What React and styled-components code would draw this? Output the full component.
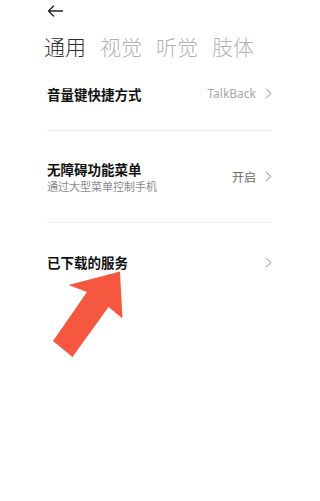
import React from "react";
import styled, { createGlobalStyle } from "styled-components";

const Global = createGlobalStyle`
  html, body { margin: 0; padding: 0; background: #fff; }
  body { font-family: "Noto Sans CJK SC", "Noto Sans", sans-serif; }
  * { box-sizing: border-box; }
`;

const Page = styled.div`
  position: relative;
  width: 320px;
  height: 501px;
  padding: 0 48px 0 47px;
  background: #fff;
  overflow: hidden;
`;

const Header = styled.div`
  height: 22px;
  display: flex;
  align-items: center;
`;

const Tabs = styled.div`
  display: flex;
  gap: 14px;
  margin: 10px 0 0 -3px;
  height: 28px;
  align-items: center;
`;

const Tab = styled.div`
  font-size: 21px;
  line-height: 28px;
  font-weight: 300;
  color: ${(p) => (p.$active ? "#2e2e2e" : "#b2b2b2")};
`;

const List = styled.div`
  display: flex;
  flex-direction: column;
`;

const Row = styled.div`
  height: ${(p) => p.$h}px;
  padding-bottom: ${(p) => p.$pb || 0}px;
  display: flex;
  align-items: center;
  justify-content: space-between;
  border-bottom: ${(p) => (p.$divider ? "1px solid #ececec" : "none")};
`;

const TextBlock = styled.div`
  display: flex;
  flex-direction: column;
`;

const Title = styled.div`
  font-size: 13.5px;
  line-height: 18px;
  font-weight: 700;
  color: #111;
`;

const Subtitle = styled.div`
  font-size: 11px;
  line-height: 16px;
  color: #8a8a8a;
`;

const Trail = styled.div`
  display: flex;
  align-items: center;
  gap: 9px;
`;

const Value = styled.span`
  font-size: 12px;
  font-family: ${(p) => (p.$latin ? '"Noto Sans", sans-serif' : '"Noto Sans CJK SC", sans-serif')};
  color: ${(p) => (p.$latin ? "#a8a8a8" : "#6a6a6a")};
  line-height: 16px;
`;

const Overlay = styled.svg`
  position: absolute;
  left: 52px;
  top: 270px;
  width: 72px;
  height: 89px;
`;

const BackIcon = () => (
  <svg width="16" height="12" viewBox="0 0 16 12" fill="none">
    <path d="M15.5 6H1.5M6.5 1L1.5 6L6.5 11" stroke="#222" strokeWidth="1.4" strokeLinecap="round" strokeLinejoin="round" />
  </svg>
);

const Chevron = () => (
  <svg width="7" height="11" viewBox="0 0 7 11" fill="none">
    <path d="M1 1L6 5.5L1 10" stroke="#b8b8b8" strokeWidth="1.1" strokeLinecap="round" strokeLinejoin="round" />
  </svg>
);

export default function App() {
  return (
    <>
      <Global />
      <Page>
        <Header>
          <BackIcon />
        </Header>
        <Tabs>
          <Tab $active>通用</Tab>
          <Tab>视觉</Tab>
          <Tab>听觉</Tab>
          <Tab>肢体</Tab>
        </Tabs>
        <List>
          <Row $h={71} $pb={3} $divider>
            <Title>音量键快捷方式</Title>
            <Trail>
              <Value $latin>TalkBack</Value>
              <Chevron />
            </Trail>
          </Row>
          <Row $h={92} $divider>
            <TextBlock>
              <Title>无障碍功能菜单</Title>
              <Subtitle>通过大型菜单控制手机</Subtitle>
            </TextBlock>
            <Trail>
              <Value>开启</Value>
              <Chevron />
            </Trail>
          </Row>
          <Row $h={78}>
            <Title>已下载的服务</Title>
            <Trail>
              <Chevron />
            </Trail>
          </Row>
        </List>
        <Overlay viewBox="0 0 72 89">
          <polygon
            points="68,1.5 16.5,15 35,22 1,71 20.5,87 56.5,37 70.5,48.5"
            fill="#f5573f"
          />
        </Overlay>
      </Page>
    </>
  );
}
